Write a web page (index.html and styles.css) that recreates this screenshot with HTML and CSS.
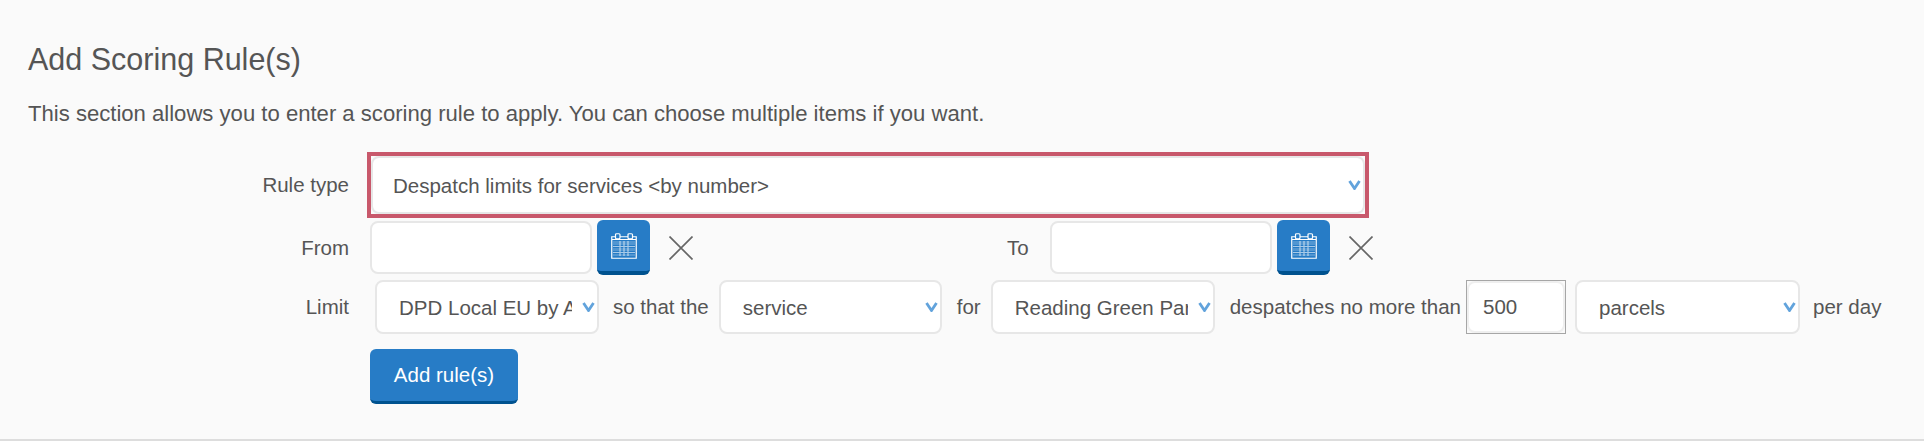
FILE: index.html
```html
<!DOCTYPE html>
<html lang="en">
<head>
<meta charset="utf-8">
<title>Add Scoring Rule(s)</title>
<link rel="stylesheet" href="styles.css">
</head>
<body>
<section class="panel">
  <h2 class="title">Add Scoring Rule(s)</h2>
  <p class="intro">This section allows you to enter a scoring rule to apply. You can choose multiple items if you want.</p>
  <form class="form">
    <div class="row row-type">
      <label class="label">Rule type</label>
      <div class="select-wrap select-main">
        <select class="select"><option>Despatch limits for services &lt;by number&gt;</option></select>
        <svg class="chev" viewBox="0 0 13 10"><path d="M1.500 1 6.500 8.500 11.500 1"/></svg>
      </div>
    </div>
    <div class="row row-dates">
      <label class="label">From</label>
      <input class="input input-date" type="text">
      <button class="cal" type="button" aria-label="Pick from date">
        <svg viewBox="0 0 26 26"><rect class="band" x="2" y="8" width="22" height="4"/><rect class="band" x="2" y="15" width="22" height="3"/><rect class="band" x="2" y="21" width="22" height="2"/><path class="c2" d="M9 8v15M13 8v15M17 8v15M2 13.500h22M2 19.500h22"/><path class="c1" d="M.75 3.750h24.500v21.500H.75zM.75 6.500h24.500"/><rect class="ring" x="4.500" y=".75" width="4.500" height="5" rx="1"/><rect class="ring" x="17" y=".75" width="4.500" height="5" rx="1"/></svg>
      </button>
      <svg class="clear" viewBox="0 0 24 24"><path d="M.5.5 23.500 23.500M23.500.5.5 23.500"/></svg>
      <label class="label-to">To</label>
      <input class="input input-date" type="text">
      <button class="cal" type="button" aria-label="Pick to date">
        <svg viewBox="0 0 26 26"><rect class="band" x="2" y="8" width="22" height="4"/><rect class="band" x="2" y="15" width="22" height="3"/><rect class="band" x="2" y="21" width="22" height="2"/><path class="c2" d="M9 8v15M13 8v15M17 8v15M2 13.500h22M2 19.500h22"/><path class="c1" d="M.75 3.750h24.500v21.500H.75zM.75 6.500h24.500"/><rect class="ring" x="4.500" y=".75" width="4.500" height="5" rx="1"/><rect class="ring" x="17" y=".75" width="4.500" height="5" rx="1"/></svg>
      </button>
      <svg class="clear" viewBox="0 0 24 24"><path d="M.5.5 23.500 23.500M23.500.5.5 23.500"/></svg>
    </div>
    <div class="row row-limit">
      <label class="label">Limit</label>
      <div class="select-wrap select-a">
        <select class="select"><option>DPD Local EU by Air</option></select>
        <svg class="chev" viewBox="0 0 13 10"><path d="M1.500 1 6.500 8.500 11.500 1"/></svg>
      </div>
      <span class="text t-so">so that the</span>
      <div class="select-wrap select-b">
        <select class="select"><option>service</option></select>
        <svg class="chev" viewBox="0 0 13 10"><path d="M1.500 1 6.500 8.500 11.500 1"/></svg>
      </div>
      <span class="text t-for">for</span>
      <div class="select-wrap select-c">
        <select class="select"><option>Reading Green Park</option></select>
        <svg class="chev" viewBox="0 0 13 10"><path d="M1.500 1 6.500 8.500 11.500 1"/></svg>
      </div>
      <span class="text t-des">despatches no more than</span>
      <div class="num-wrap"><input class="input input-num" type="text" value="500"></div>
      <div class="select-wrap select-d">
        <select class="select"><option>parcels</option></select>
        <svg class="chev" viewBox="0 0 13 10"><path d="M1.500 1 6.500 8.500 11.500 1"/></svg>
      </div>
      <span class="text t-per">per day</span>
    </div>
    <div class="row-btn">
      <button class="btn" type="button">Add rule(s)</button>
    </div>
  </form>
</section>
</body>
</html>
```

FILE: styles.css
```css
* { box-sizing: border-box; }
html, body { margin: 0; padding: 0; background: #fff; }
body { font-family: "Liberation Sans", Arial, sans-serif; font-size: 20.500px; color: #555; }
.panel { height: 441px; padding: 44px 0 0 28px; background: #fafafa; border-bottom: 2px solid #ddd; }
.title { margin: 0; font-size: 30.500px; line-height: 30px; font-weight: 400; color: #555; }
.intro { margin: 26px 0 0; font-size: 22.100px; line-height: 28px; }
.form { margin-top: 24px; }
.row { display: flex; align-items: center; }
.label { width: 321px; margin-right: 18px; text-align: right; }
.row-type { height: 66px; }
.select-wrap { position: relative; height: 54px; }
.select { display: block; width: 100%; height: 100%; padding: 0 25px 0 22px; appearance: none; -webkit-appearance: none; border: 2px solid #e7e7e7; border-radius: 8px; background: #fff; font: inherit; color: #555; }
.chev { position: absolute; right: 4px; top: 50%; width: 13px; height: 10px; margin-top: -5px; fill: none; stroke: #62a3dc; stroke-width: 2.800; }
.select-main { width: 1002px; height: 66px; padding: 0; border: 4px solid #c8586b; }
.select-main .select { padding-left: 20px; }
.row-dates { height: 55px; margin-top: 2px; }
.row-dates .label { margin-right: 21px; }
.input { height: 53px; border: 2px solid #e7e7e7; border-radius: 8px; background: #fff; font: inherit; color: #555; padding: 0 22px; }
.input-date { width: 222px; }
.cal { width: 53px; height: 55px; margin-left: 5px; padding: 0; border: 0; border-bottom: 4px solid #00528f; border-radius: 6px; background: #277cc6; display: flex; align-items: center; justify-content: center; }
.cal svg { width: 26px; height: 26px; margin-top: 1px; }
.c1 { fill: none; stroke: #fff; stroke-width: 1.200; }
.c2 { fill: none; stroke: #fff; stroke-width: 1.200; opacity: .6; }
.band { fill: #fff; opacity: .2; }
.ring { fill: #277cc6; stroke: #fff; stroke-width: 1.200; }
.clear { width: 24px; height: 24px; margin-left: 19px; fill: none; stroke: #666; stroke-width: 1.700; }
.label-to { margin-left: 314px; margin-right: 21px; width: 22px; white-space: nowrap; }
.row-limit { height: 54px; margin-top: 5px; }
.row-limit .label { margin-right: 26px; }
.text { white-space: nowrap; }
.select-a { width: 224px; }
.select-b { width: 223px; margin-left: 10px; }
.select-c { width: 224px; margin-left: 10px; }
.t-so { margin-left: 14px; }
.t-for { margin-left: 15px; }
.t-des { margin-left: 15px; }
.num-wrap { width: 100px; height: 54px; margin-left: 5px; border: 1px solid #a6a6a6; }
.input-num { display: block; width: 100%; height: 100%; padding-left: 14px; border-color: #efefef; }
.select-d { width: 225px; margin-left: 9px; }
.t-per { margin-left: 13px; }
.row-btn { margin: 15px 0 0 342px; }
.btn { display: block; width: 148px; height: 55px; padding: 0; border: 0; border-bottom: 3px solid #00528f; border-radius: 6px; background: #277cc6; color: #fff; font: inherit; }
```
